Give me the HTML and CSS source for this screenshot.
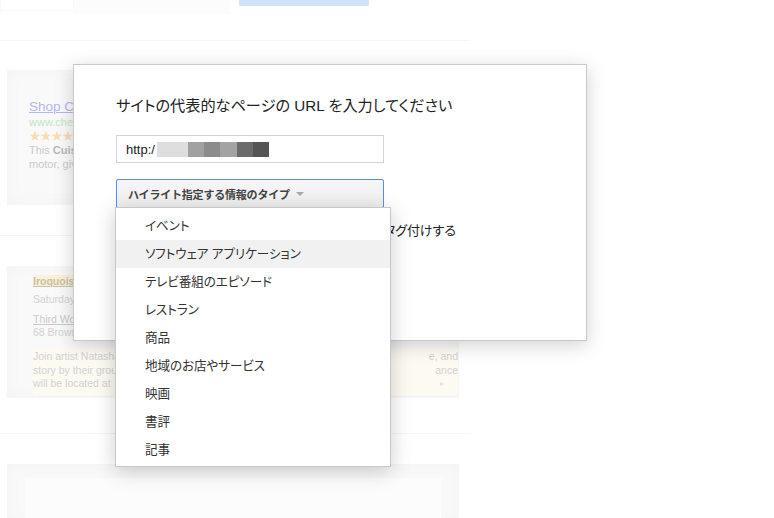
FILE: index.html
```html
<!DOCTYPE html>
<html lang="ja">
<head>
    <meta charset="UTF-8">
    <title>データ ハイライター</title>
    <link rel="stylesheet" href="styles.css">
</head>
<body>
    <!-- 背景のページ（薄く表示） -->
    <div class="page">
        <div class="topbar">
            <div class="top-box"></div>
            <div class="top-field"></div>
            <div class="top-btn"></div>
        </div>

        <div class="card result">
            <a class="r-title">Shop Cuisinart</a>
            <div class="r-url">www.chefs.com</div>
            <div class="r-stars">★★★★★</div>
            <div class="r-desc">This <b>Cuisinart</b></div>
            <div class="r-desc">motor, giving</div>
        </div>

        <div class="sep"></div>

        <div class="card event">
            <div class="ev-title"><span>Iroquois</span></div>
            <div class="ev-date">Saturday</div>
            <div class="ev-place"><u>Third Wonder</u></div>
            <div class="ev-addr">68 Brown</div>
            <div class="ev-desc">
                <div class="ev-line"><span>Join artist Natasha</span><span>e, and</span></div>
                <div class="ev-line"><span>story by their group</span><span>ance</span></div>
                <div class="ev-line"><span>will be located at</span><span class="ev-more">▸</span></div>
            </div>
        </div>

        <div class="sep sep-low"></div>

        <div class="card blank">
            <div class="blank-inner"></div>
        </div>
    </div>

    <!-- ダイアログ -->
    <div class="dialog">
        <div class="dlg-title">サイトの代表的なページの URL を入力してください</div>

        <div class="url-input">
            <span class="url-text">http:/</span><span class="px" style="width:31px;background:#dedede"></span><span class="px" style="width:16px;background:#a1a1a1"></span><span class="px" style="width:16px;background:#8c8c8c"></span><span class="px" style="width:17px;background:#a3a3a3"></span><span class="px" style="width:16px;background:#6b6b6b"></span><span class="px" style="width:16px;background:#555"></span>
        </div>

        <div class="select-wrap">
            <div class="select-btn">ハイライト指定する情報のタイプ<span class="caret"></span></div>

            <div class="menu">
                <div class="menu-item">イベント</div>
                <div class="menu-item hover">ソフトウェア アプリケーション</div>
                <div class="menu-item">テレビ番組のエピソード</div>
                <div class="menu-item">レストラン</div>
                <div class="menu-item">商品</div>
                <div class="menu-item">地域のお店やサービス</div>
                <div class="menu-item">映画</div>
                <div class="menu-item">書評</div>
                <div class="menu-item">記事</div>
            </div>
        </div>

        <div class="tag-row">他のページにタグ付けする</div>
    </div>
</body>
</html>
```

FILE: styles.css
```css
body {
    margin: 0;
    font-family: 'Liberation Sans', Arial, sans-serif;
    background: #fff;
    color: #222;
}

/* 背景ページ */
.page {
    width: 470px;
}
.topbar {
    height: 40px;
    border-bottom: 1px solid #f5f5f5;
    display: flex;
    align-items: flex-start;
}
.top-box {
    width: 72px;
    height: 10px;
    border: 1px solid #f8f8f8;
    border-top: none;
}
.top-field {
    width: 156px;
    height: 14px;
    background: #fcfcfc;
}
.top-btn {
    width: 130px;
    height: 6px;
    margin-left: 9px;
    background: #d2e2fa;
    border-radius: 0 0 2px 2px;
}
.card {
    margin: 29px 11px 0 7px;
    background: #f9f9f9;
    box-shadow: inset 0 0 16px #f3f3f3;
}
.sep {
    margin-top: 30px;
    border-top: 1px solid #f5f5f5;
}
.sep.sep-low {
    margin-top: 35px;
}
.sep + .card {
    margin-top: 30px;
}
.result {
    height: 135px;
    padding: 29px 22px 0;
    box-sizing: border-box;
    font-size: 11px;
    line-height: 14px;
    white-space: nowrap;
}
.r-title {
    display: block;
    font-size: 13.5px;
    line-height: 16px;
    color: #b6b6ee;
    text-decoration: underline;
}
.r-url { color: #c3e6c6; }
.r-stars {
    color: #fbdcae;
    font-size: 12px;
    letter-spacing: -1px;
}
.r-desc { color: #cacaca; }
.r-desc b { color: #b8b8b8; }

.event {
    height: 132px;
    padding: 9px 0 0 26px;
    box-sizing: border-box;
    font-size: 10.5px;
    line-height: 13px;
    color: #d2d2d2;
    white-space: nowrap;
}
.ev-title span {
    font-weight: bold;
    color: #c8c0ac;
    background: #fcf1d4;
    text-decoration: underline;
}
.ev-date { margin-top: 5px; }
.ev-place { margin-top: 7px; color: #cacaca; }
.ev-desc {
    margin-top: 9px;
    width: 425px;
    padding: 2px 0 4px;
    background: #fdfaf2;
    line-height: 13.5px;
}
.ev-line {
    display: flex;
    justify-content: space-between;
}
.ev-more {
    font-size: 8px;
    color: #e2e2e2;
    margin-right: 14px;
}
.blank {
    height: 60px;
    padding: 14px 18px 0;
    box-sizing: border-box;
}
.blank-inner {
    height: 100%;
    background: #fcfcfc;
}

/* ダイアログ */
.dialog {
    position: absolute;
    left: 73px;
    top: 64px;
    width: 514px;
    height: 277px;
    box-sizing: border-box;
    padding: 32px 42px 0;
    background: #fff;
    border: 1px solid #c9c9c9;
    box-shadow: 0 4px 18px rgba(0, 0, 0, 0.18);
    font-family: 'Liberation Sans', 'Noto Sans CJK JP', sans-serif;
}
.dlg-title {
    font-size: 15.2px;
    line-height: 18px;
    color: #222;
    font-feature-settings: "palt";
}
.url-input {
    margin-top: 20px;
    width: 268px;
    height: 28px;
    box-sizing: border-box;
    border: 1px solid #d4d4d4;
    padding: 0 9px;
    display: flex;
    align-items: center;
    font-size: 13px;
    color: #222;
}
.url-text {
    margin-right: 2px;
}
.px {
    display: inline-block;
    height: 15px;
}
.select-wrap {
    position: relative;
    margin-top: 16px;
    width: 268px;
}
.select-btn {
    height: 29px;
    box-sizing: border-box;
    border: 1px solid #4d90fe;
    border-radius: 2px;
    background: linear-gradient(#f6f6f6, #f0f0f0);
    padding-left: 11px;
    display: flex;
    align-items: center;
    font-size: 11px;
    font-weight: bold;
    color: #444;
    letter-spacing: -0.2px;
}
.caret {
    margin-left: 6px;
    border-left: 4px solid transparent;
    border-right: 4px solid transparent;
    border-top: 4px solid #aaa;
}
.menu {
    position: absolute;
    top: 28px;
    left: -1px;
    width: 276px;
    box-sizing: border-box;
    padding: 4px 0 2px;
    background: #fff;
    border: 1px solid #c8c8c8;
    box-shadow: 0 4px 20px rgba(0, 0, 0, 0.2);
    z-index: 2;
}
.menu-item {
    height: 28px;
    line-height: 28px;
    padding-left: 29px;
    font-size: 12.6px;
    letter-spacing: -0.1px;
    color: #333;
    font-feature-settings: "palt";
}
.menu-item.hover {
    background: #f1f1f1;
}
.tag-row {
    margin-top: 14px;
    padding-right: 88px;
    text-align: right;
    font-size: 13px;
    line-height: 18px;
    color: #222;
    font-feature-settings: "palt";
}
```
